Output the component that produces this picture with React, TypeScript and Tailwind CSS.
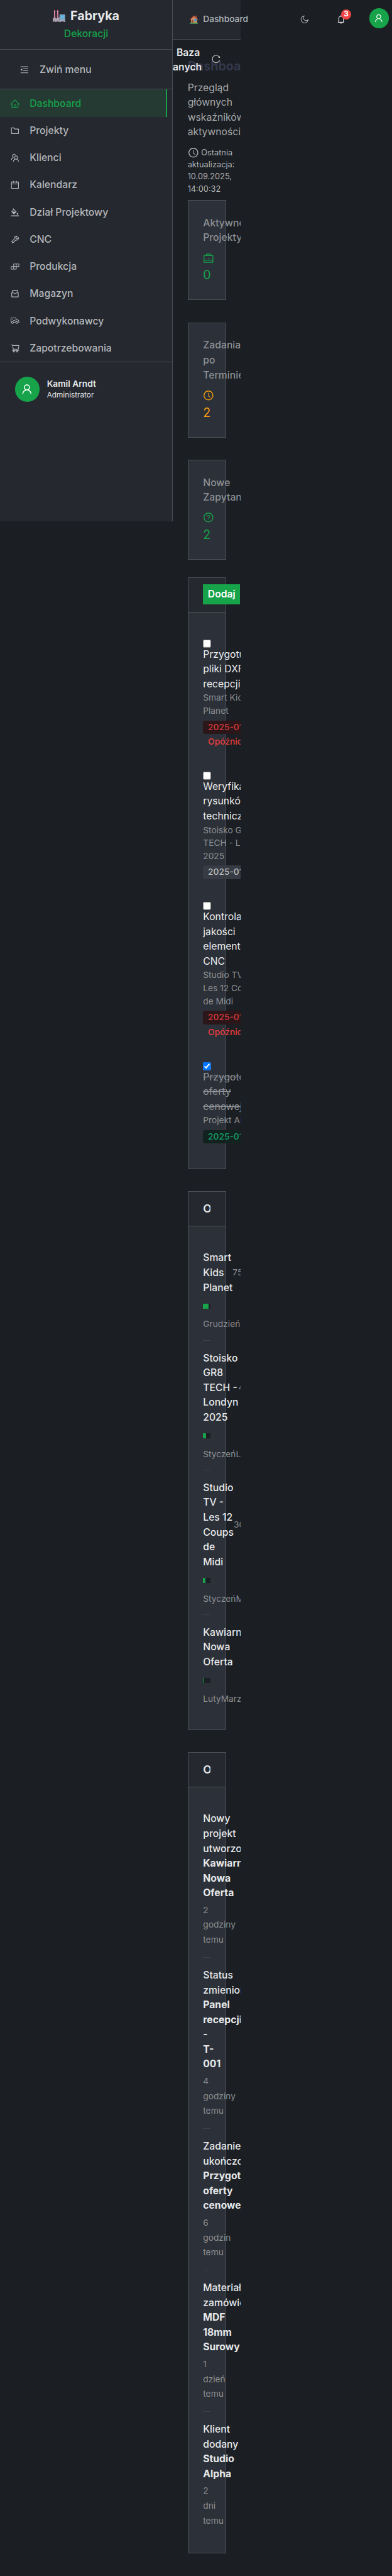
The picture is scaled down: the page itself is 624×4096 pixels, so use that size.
import type { ReactNode } from "react";
import type { IconType } from "react-icons";
import {
  AiOutlineBell,
  AiOutlineBgColors,
  AiOutlineBuild,
  AiOutlineCalendar,
  AiOutlineClockCircle,
  AiOutlineFolder,
  AiOutlineHome,
  AiOutlineInbox,
  AiOutlineMenuFold,
  AiOutlineMoon,
  AiOutlineQuestionCircle,
  AiOutlineReload,
  AiOutlineShoppingCart,
  AiOutlineTeam,
  AiOutlineTool,
  AiOutlineTruck,
  AiOutlineUser,
} from "react-icons/ai";

const menu: { label: string; icon: IconType; active?: boolean }[] = [
  { label: "Dashboard", icon: AiOutlineHome, active: true },
  { label: "Projekty", icon: AiOutlineFolder },
  { label: "Klienci", icon: AiOutlineTeam },
  { label: "Kalendarz", icon: AiOutlineCalendar },
  { label: "Dział Projektowy", icon: AiOutlineBgColors },
  { label: "CNC", icon: AiOutlineTool },
  { label: "Produkcja", icon: AiOutlineBuild },
  { label: "Magazyn", icon: AiOutlineInbox },
  { label: "Podwykonawcy", icon: AiOutlineTruck },
  { label: "Zapotrzebowania", icon: AiOutlineShoppingCart },
];

const tasks = [
  { title: ["Przygotuj", "pliki DXF", "recepcji"], project: ["Smart Kids", "Planet"], date: "2025-01-15", state: "late" },
  { title: ["Weryfikacja", "rysunków", "technicznych"], project: ["Stoisko GR8", "TECH - Londyn", "2025"], date: "2025-01-18", state: "open" },
  { title: ["Kontrola", "jakości", "elementów", "CNC"], project: ["Studio TV -", "Les 12 Coups", "de Midi"], date: "2025-01-16", state: "late" },
  { title: ["Przygotowanie", "oferty", "cenowej"], project: ["Projekt Alpha"], date: "2025-01-14", state: "done" },
];

const tagStyle: Record<string, string> = {
  late: "bg-[#2b1619] text-[#d93a3c]",
  open: "bg-[#373b43] text-[#b9bcbf]",
  done: "bg-[#12221f] text-[#14a36b]",
};

const projects = [
  { title: ["Smart", "Kids", "Planet"], percent: 75, from: "Grudzień", to: "Styczeń" },
  { title: ["Stoisko", "GR8", "TECH -", "Londyn", "2025"], percent: 40, from: "Styczeń", to: "Luty" },
  { title: ["Studio", "TV -", "Les 12", "Coups", "de", "Midi"], percent: 30, from: "Styczeń", to: "Marzec" },
  { title: ["Kawiarnia", "Nowa", "Oferta"], percent: 10, from: "Luty", to: "Marzec" },
];

const events = [
  { text: ["Nowy", "projekt", "utworzony"], subject: ["Kawiarnia", "Nowa", "Oferta"], time: ["2", "godziny", "temu"] },
  { text: ["Status", "zmieniony"], subject: ["Panel", "recepcji", "-", "T-", "001"], time: ["4", "godziny", "temu"] },
  { text: ["Zadanie", "ukończone"], subject: ["Przygotowanie", "oferty", "cenowej"], time: ["6", "godzin", "temu"] },
  { text: ["Materiał", "zamówiony"], subject: ["MDF", "18mm", "Surowy"], time: ["1", "dzień", "temu"] },
  { text: ["Klient", "dodany"], subject: ["Studio", "Alpha"], time: ["2", "dni", "temu"] },
];

function Lines({ items }: { items: string[] }) {
  return (
    <>
      {items.map((line) => (
        <span key={line} className="block">
          {line}
        </span>
      ))}
    </>
  );
}

function Briefcase() {
  return (
    <svg viewBox="-1 -1 18 18" className="size-[18px] shrink-0" fill="none" stroke="currentColor" strokeWidth="1.3">
      <path d="M.8 3.500h14.400v11H.8zM4.800 3.500V.9h6.400v2.600M.8 10.800h14.400" />
      <path d="M7.200 7.900h1.600" strokeWidth="1.4" />
    </svg>
  );
}

function Factory() {
  return (
    <svg viewBox="0 0 20 20" className="size-5">
      <path d="M2 0h2v13H2zM7 0h2v13H7z" fill="#d94a78" />
      <path d="M2 2h2v1.5H2zM2 5.5h2V7H2zM2 9h2v1.5H2zM7 2h2v1.5H7zM7 5.5h2V7H7zM7 9h2v1.5H7z" fill="#d9cfd8" />
      <path d="M0 14l1.5-2h3L6 14l1-2h4v8H0z" fill="#a8a0ae" />
      <path d="M11 7h9v13h-9z" fill="#9fa6b8" />
      <path d="M12 8h7v6.5h-7z" fill="#4fa9de" />
      <path d="M14.1 8v6.5M16.6 8v6.5M12 10.2h7M12 12.4h7" stroke="#a9c4dc" strokeWidth=".5" />
      <path d="M1 18h3v2H1zM6 18h3.500v2H6zM13 18h5v2h-5z" fill="#54475f" />
    </svg>
  );
}

function House() {
  return (
    <svg viewBox="0 0 14 14" className="size-3.5">
      <path d="M9.500.8h2v4h-2z" fill="#8a4b3a" />
      <path d="M2 6l5-4.500L12 6v7H2z" fill="#c58f68" />
      <path d="M7 .5L.3 7l1 1L7 3l5.700 5 1-1z" fill="#cf5a3c" />
      <path d="M3.200 8h2.500v5H3.200z" fill="#8c4f35" />
      <path d="M7.500 6h3.500v3.400H7.500z" fill="#2f97d8" />
      <path d="M0 12.400h14V14H0z" fill="#4aa65a" />
    </svg>
  );
}

function Stat({ title, value, color, children }: { title: string[]; value: string; color: string; children: ReactNode }) {
  return (
    <div className="w-[62px] border border-[#4c4f55] bg-[#2c3038] p-6">
      <div className="mb-2 leading-6 font-medium text-[#8b8f94]">
        <Lines items={title} />
      </div>
      <div className={color}>
        <div className="flex h-[26px] items-center text-lg">{children}</div>
        <div className="text-xl leading-[30px]">{value}</div>
      </div>
    </div>
  );
}

function Panel({ header, className, children }: { header: ReactNode; className: string; children: ReactNode }) {
  return (
    <section className={`w-[62px] border border-[#4c4f55] bg-[#2c3038] ${className}`}>
      <div className="flex h-14 items-center border-b border-[#4c4f55] bg-[#25282f] px-6">{header}</div>
      {children}
    </section>
  );
}

function PanelTitle() {
  return <h2 className="w-3 overflow-hidden text-lg leading-6 font-semibold text-[#e6e8ea]">O</h2>;
}

function Sidebar() {
  return (
    <aside className="flex h-[844px] w-[280px] shrink-0 flex-col border-r border-[#4a4d53] bg-[#25282f]">
      <div className="flex h-20 flex-col items-center border-b border-[#4a4d53] pt-3">
        <div className="flex items-center gap-[8.5px] text-xl leading-7 font-bold text-[#e6e8ea]">
          <Factory />
          Fabryka
        </div>
        <div className="mt-[3px] leading-6 font-medium text-[#16a34a]">Dekoracji</div>
      </div>
      <div className="flex h-[65px] items-center gap-4 border-b border-[#4a4d53] pt-px pl-8 font-medium text-[#b4b7ba]">
        <AiOutlineMenuFold />
        Zwiń menu
      </div>
      <nav className="flex h-[441px] flex-col border-b border-[#4a4d53]">
        {menu.map(({ label, icon: Icon, active }) => (
          <a
            key={label}
            className={`flex h-11 w-[271px] shrink-0 items-center gap-4 pt-px pl-4 font-medium ${
              active ? "border-r-[3px] border-[#16a34a] bg-[#243a33] text-[#16a34a]" : "text-[#b4b7ba]"
            }`}
          >
            <Icon />
            {label}
          </a>
        ))}
      </nav>
      <div className="flex items-center gap-3 px-6 pt-6">
        <span className="flex size-10 items-center justify-center rounded-full bg-[#16a34a] text-xl text-white">
          <AiOutlineUser />
        </span>
        <div className="pt-px text-[#e6e8ea]">
          <div className="text-sm leading-5 font-semibold">Kamil Arndt</div>
          <div className="text-xs leading-[18px]">Administrator</div>
        </div>
      </div>
    </aside>
  );
}

function Topbar() {
  return (
    <header className="flex h-16 w-[110px] items-center border-b border-[#4a4d53] bg-[#25282f] pl-6 text-[#b4b7ba]">
      <div className="flex w-[181px] shrink-0 items-center text-sm font-medium">
        <span className="w-[25px] pl-[3px]">
          <House />
        </span>
        <span>Dashboard</span>
      </div>
      <AiOutlineMoon className="shrink-0" />
      <div className="relative ml-11 shrink-0">
        <AiOutlineBell className="text-[#d4d6d8]" />
        <span className="absolute -top-2 left-2 flex size-4 items-center justify-center rounded-full bg-[#ef4444] text-xs font-bold text-white">
          3
        </span>
      </div>
      <span className="mb-1 ml-[37px] flex size-8 shrink-0 items-center justify-center rounded-full bg-[#16a34a] text-white">
        <AiOutlineUser />
      </span>
    </header>
  );
}

function Intro() {
  return (
    <div className="relative h-[260px] pt-[30px]">
      <h1 className="text-xl leading-7 font-bold text-[#33374b]">Dashboard</h1>
      <p className="mt-2 leading-6 text-[#a5a8ab]">
        <Lines items={["Przegląd", "głównych", "wskaźników", "aktywności"]} />
      </p>
      <div className="mt-[11px] text-[13px] leading-[19.6px] text-[#b0b3b6]">
        <div className="flex items-center gap-1">
          <AiOutlineClockCircle className="shrink-0 text-lg" />
          Ostatnia
        </div>
        <Lines items={["aktualizacja:", "10.09.2025,", "14:00:32"]} />
      </div>
      <div className="absolute top-[9px] -left-6 h-12 w-[100px] overflow-hidden leading-6 font-semibold text-[#e6e8ea]">
        <div className="pl-1.5">Baza</div>
        <div className="-ml-2.5">danych</div>
        <AiOutlineReload className="absolute top-[15px] left-[62px] text-[#c0c3c6]" />
      </div>
    </div>
  );
}

export default function App() {
  return (
    <div className="h-[4096px] w-full overflow-hidden bg-[#1b1e22] font-['Inter',sans-serif]">
      <div className="flex h-[4169px] w-[635px] items-start text-base [zoom:0.9825]">
        <Sidebar />
        <div className="w-[110px] shrink-0 whitespace-nowrap">
          <Topbar />
          <main className="w-[110px] overflow-hidden pl-6">
            <Intro />
            <div className="flex flex-col gap-9">
              <Stat title={["Aktywne", "Projekty"]} value="0" color="text-[#16a34a]">
                <Briefcase />
              </Stat>
              <Stat title={["Zadania", "po", "Terminie"]} value="2" color="text-[#f59e0b]">
                <AiOutlineClockCircle className="shrink-0" />
              </Stat>
              <Stat title={["Nowe", "Zapytania"]} value="2" color="text-[#16a34a]">
                <AiOutlineQuestionCircle className="shrink-0" />
              </Stat>
            </div>

            <Panel
              className="mt-7"
              header={
                <button className="mb-px h-8 w-[60px] shrink-0 bg-[#16a34a] text-base font-semibold text-white">Dodaj</button>
              }
            >
              <div className="flex flex-col gap-[37px] px-6 pt-11 pb-10">
                {tasks.map((task) => (
                  <div key={task.title.join(" ")}>
                    <input type="checkbox" defaultChecked={task.state === "done"} className="block size-[13px]" />
                    <div
                      className={`-mt-px leading-6 ${
                        task.state === "done" ? "text-[#8f9398] line-through" : "text-[#ebedef]"
                      }`}
                    >
                      <Lines items={task.title} />
                    </div>
                    <div className="text-sm leading-[21px] text-[#8b8e92]">
                      <Lines items={task.project} />
                    </div>
                    <div className={`mt-[5px] h-[22px] w-[90px] rounded-sm pl-2 text-sm leading-[22px] font-medium ${tagStyle[task.state]}`}>
                      {task.date}
                    </div>
                    {task.state === "late" && (
                      <div className="mt-0.5 h-[22px] pl-2 text-sm leading-[22px] font-medium text-[#e53e3f]">Opóźnione</div>
                    )}
                  </div>
                ))}
              </div>
            </Panel>

            <Panel className="mt-9" header={<PanelTitle />}>
              <div className="flex flex-col gap-4 px-6 pt-[39px] pb-[39px]">
                {projects.map((project, index) => (
                  <div
                    key={project.title.join(" ")}
                    className={index < projects.length - 1 ? "w-3 border-b border-[#3d4148] pb-[15px]" : "w-3"}
                  >
                    <div className="flex items-center">
                      <div className="leading-6 font-medium text-[#e6e8ea]">
                        <Lines items={project.title} />
                      </div>
                      <span className="text-sm text-[#8b8e92]">{project.percent}%</span>
                    </div>
                    <div className="mt-3.5 h-2 w-3 bg-[#1b1e22]">
                      <div className="h-2 bg-[#16a34a]" style={{ width: `${project.percent}%` }} />
                    </div>
                    <div className="mt-[15px] flex text-sm leading-[21px] text-[#8b8e92]">
                      <span>{project.from}</span>
                      <span>{project.to}</span>
                    </div>
                  </div>
                ))}
              </div>
            </Panel>

            <Panel className="mt-9" header={<PanelTitle />}>
              <div className="flex flex-col gap-4 px-6 pt-[39px] pb-10">
                {events.map((event, index) => (
                  <div
                    key={event.subject.join(" ")}
                    className={index < events.length - 1 ? "w-3 border-b border-[#3d4148] pb-4" : "w-3"}
                  >
                    <div className="leading-6 font-medium text-[#e6e8ea]">
                      <Lines items={event.text} />
                      <strong className="font-bold">
                        <Lines items={event.subject} />
                      </strong>
                    </div>
                    <div className="mt-1 text-sm leading-6 text-[#8b8e92]">
                      <Lines items={event.time} />
                    </div>
                  </div>
                ))}
              </div>
            </Panel>
          </main>
        </div>
      </div>
    </div>
  );
}
